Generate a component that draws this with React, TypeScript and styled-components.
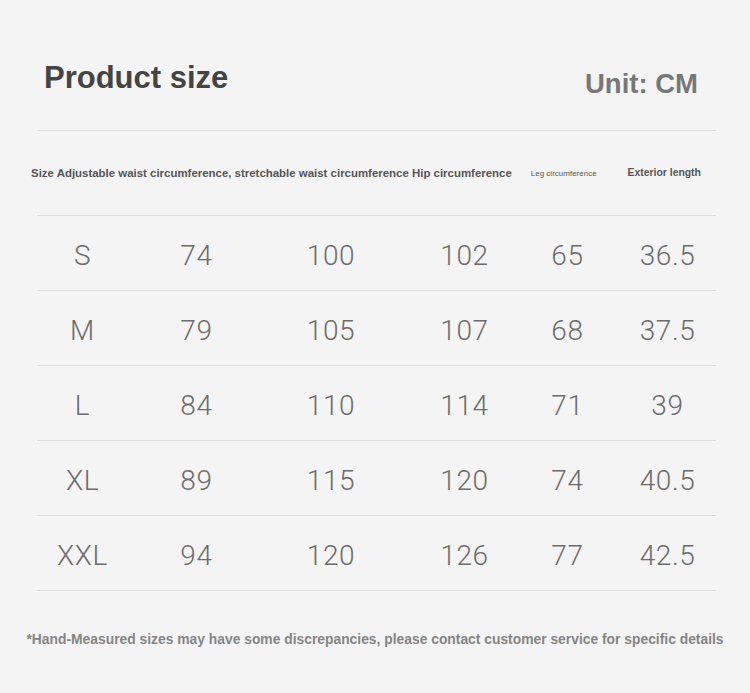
import React from "react";
import styled, { createGlobalStyle } from "styled-components";

const GlobalStyle = createGlobalStyle`
  html, body {
    margin: 0;
    padding: 0;
    background: #f4f4f4;
  }
  body {
    font-family: "Liberation Sans", Arial, sans-serif;
  }
`;

const Page = styled.div`
  width: 750px;
  height: 693px;
  background: #f4f4f4;
  box-sizing: border-box;
  overflow: hidden;
`;

const Sheet = styled.div`
  margin-left: 37px;
  width: 679px;
`;

const TitleBar = styled.div`
  height: 131px;
  box-sizing: border-box;
  padding: 60px 18px 0 7px;
  display: flex;
  justify-content: space-between;
  align-items: flex-start;
  border-bottom: 1px solid #dcdcdc;
`;

const Title = styled.h1`
  margin: 0;
  font-family: "Liberation Sans", Arial, sans-serif;
  font-weight: 700;
  font-size: 31px;
  line-height: 36px;
  color: #444444;
`;

const Unit = styled.div`
  margin-top: 8px;
  font-family: "Liberation Sans", Arial, sans-serif;
  font-weight: 700;
  font-size: 27.5px;
  line-height: 32px;
  color: #777777;
`;

const HeaderRow = styled.div`
  height: 85px;
  box-sizing: border-box;
  padding-top: 1px;
  display: flex;
  align-items: center;
  border-bottom: 1px solid #dcdcdc;
`;

const HeadText = styled.span<{ $size: number; $bold?: boolean; $offset: number }>`
  margin-left: ${(p) => p.$offset}px;
  white-space: nowrap;
  font-family: "Liberation Sans", Arial, sans-serif;
  font-size: ${(p) => p.$size}px;
  font-weight: ${(p) => (p.$bold ? 700 : 400)};
  line-height: 1;
  color: #555555;
`;

const Row = styled.div`
  height: 75px;
  box-sizing: border-box;
  padding-top: 5px;
  display: grid;
  grid-template-columns: 90px 138px 131px 136px 70px 130px;
  align-items: center;
  border-bottom: 1px solid #dcdcdc;
`;

const Cell = styled.div`
  text-align: center;
  font-family: Roboto, "Liberation Sans", sans-serif;
  font-weight: 300;
  font-size: 28px;
  line-height: 1;
  letter-spacing: 0.6px;
  padding-left: 1px;
  color: #6c6c6c;
`;

const Note = styled.p`
  margin: 40px 0 0;
  text-align: center;
  white-space: nowrap;
  font-family: "Liberation Sans", Arial, sans-serif;
  font-weight: 700;
  font-size: 13.85px;
  line-height: 16px;
  color: #858585;
`;

const rows: string[][] = [
  ["S", "74", "100", "102", "65", "36.5"],
  ["M", "79", "105", "107", "68", "37.5"],
  ["L", "84", "110", "114", "71", "39"],
  ["XL", "89", "115", "120", "74", "40.5"],
  ["XXL", "94", "120", "126", "77", "42.5"],
];

export default function App() {
  return (
    <Page>
      <GlobalStyle />
      <Sheet>
        <TitleBar>
          <Title>Product size</Title>
          <Unit>Unit: CM</Unit>
        </TitleBar>
        <HeaderRow>
          <HeadText $size={11.45} $bold $offset={-6}>
            Size Adjustable waist circumference, stretchable waist circumference Hip circumference
          </HeadText>
          <HeadText $size={8} $offset={19}>
            Leg circumference
          </HeadText>
          <HeadText $size={10.4} $bold $offset={31}>
            Exterior length
          </HeadText>
        </HeaderRow>
        {rows.map((r) => (
          <Row key={r[0]}>
            {r.map((v, i) => (
              <Cell key={i}>{v}</Cell>
            ))}
          </Row>
        ))}
      </Sheet>
      <Note>
        *Hand-Measured sizes may have some discrepancies, please contact customer service for specific details
      </Note>
    </Page>
  );
}
